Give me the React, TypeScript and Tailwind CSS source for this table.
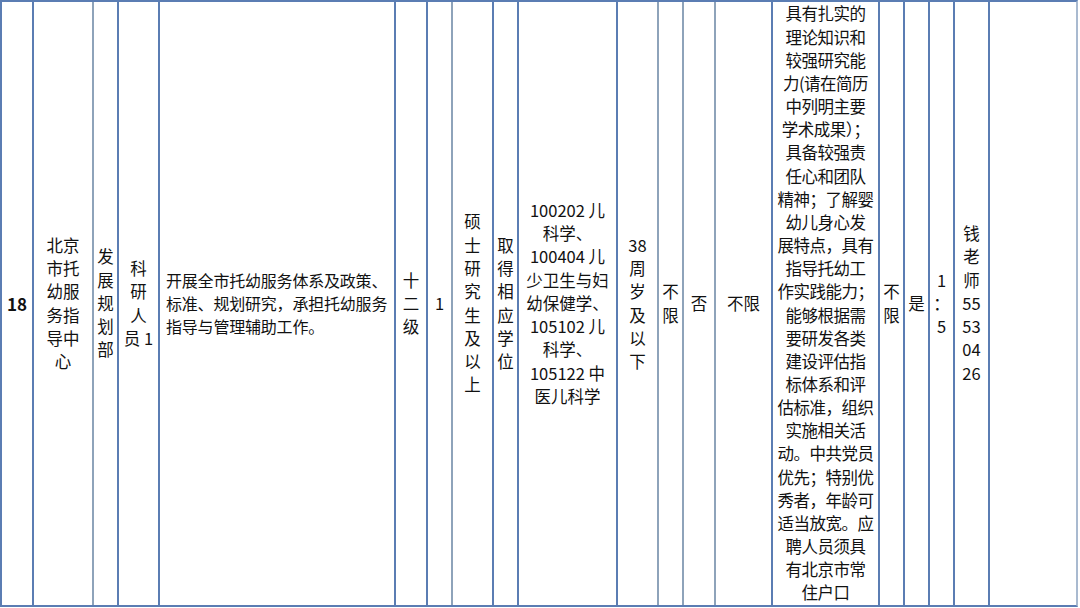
import React from "react";

type Cell = {
  w: string;
  b: string;
  lines: string[];
  bold?: boolean;
  left?: boolean;
  lh?: string;
};

const BLUE = "border-[#5b7db3]";
const GRAY = "border-[#8ea3ba]";

const cells: Cell[] = [
  { w: "w-[32px]", b: BLUE, lines: ["18"], bold: true },
  { w: "w-[60px]", b: BLUE, lines: ["北京", "市托", "幼服", "务指", "导中", "心"] },
  { w: "w-[25px]", b: GRAY, lines: ["发", "展", "规", "划", "部"] },
  { w: "w-[41px]", b: BLUE, lines: ["科", "研", "人", "员 1"] },
  {
    w: "w-[236px]",
    b: BLUE,
    left: true,
    lines: ["开展全市托幼服务体系及政策、", "标准、规划研究，承担托幼服务", "指导与管理辅助工作。"],
  },
  { w: "w-[32px]", b: BLUE, lines: ["十", "二", "级"] },
  { w: "w-[25px]", b: BLUE, lines: ["1"] },
  { w: "w-[41px]", b: GRAY, lines: ["硕", "士", "研", "究", "生", "及", "以", "上"] },
  { w: "w-[25px]", b: BLUE, lines: ["取", "得", "相", "应", "学", "位"] },
  {
    w: "w-[99px]",
    b: BLUE,
    lines: ["100202 儿", "科学、", "100404 儿", "少卫生与妇", "幼保健学、", "105102 儿", "科学、", "105122 中", "医儿科学"],
  },
  { w: "w-[41px]", b: BLUE, lines: ["38", "周", "岁", "及", "以", "下"] },
  { w: "w-[25px]", b: GRAY, lines: ["不", "限"] },
  { w: "w-[32px]", b: GRAY, lines: ["否"] },
  { w: "w-[57px]", b: GRAY, lines: ["不限"] },
  {
    w: "w-[107px]",
    b: BLUE,
    lh: "leading-[23.15px]",
    lines: [
      "具有扎实的",
      "理论知识和",
      "较强研究能",
      "力(请在简历",
      "中列明主要",
      "学术成果）；",
      "具备较强责",
      "任心和团队",
      "精神；了解婴",
      "幼儿身心发",
      "展特点，具有",
      "指导托幼工",
      "作实践能力；",
      "能够根据需",
      "要研发各类",
      "建设评估指",
      "标体系和评",
      "估标准，组织",
      "实施相关活",
      "动。中共党员",
      "优先；特别优",
      "秀者，年龄可",
      "适当放宽。应",
      "聘人员须具",
      "有北京市常",
      "住户口",
    ],
  },
  { w: "w-[25px]", b: BLUE, lines: ["不", "限"] },
  { w: "w-[25px]", b: BLUE, lines: ["是"] },
  { w: "w-[25px]", b: BLUE, lines: ["1", "：", "5"] },
  { w: "w-[35px]", b: BLUE, lines: ["钱", "老", "师", "55", "53", "04", "26"] },
  { w: "w-[88px]", b: BLUE, lines: [] },
];

export default function App() {
  return (
    <div className="w-[1080px] h-[608px] bg-white overflow-hidden font-['Noto_Sans_CJK_SC','Noto_Sans',sans-serif] text-[#111] text-[16.5px]">
      <div className="flex h-[607px] w-[1078px] border-t-2 border-b-2 border-[#5b7db3] border-r-2 border-r-[#a9bad0]">
        {cells.map((c, i) => (
          <div
            key={i}
            className={`${c.w} ${c.b} border-l-2 h-full shrink-0 flex items-center ${c.left ? "justify-start pl-[6px]" : "justify-center"}`}
          >
            <div
              className={`${c.left ? "text-left text-[16px] tracking-[-0.2px]" : "text-center"} ${c.lh ?? "leading-[23.3px]"} ${c.bold ? "font-bold text-[17px]" : ""} whitespace-nowrap`}
            >
              {c.lines.map((l, j) => (
                <div key={j} className={c.lines.length > 12 ? "tracking-[-0.5px]" : ""}>
                  {l}
                </div>
              ))}
            </div>
          </div>
        ))}
      </div>
    </div>
  );
}
